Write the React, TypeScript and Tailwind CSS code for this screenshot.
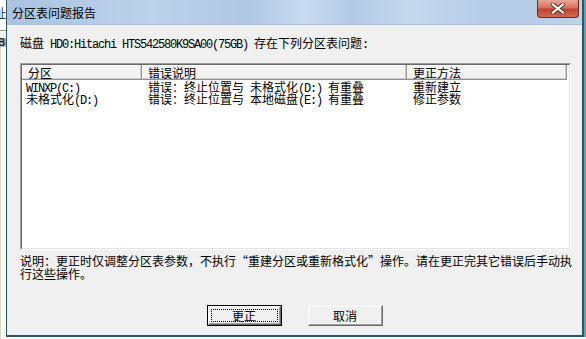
import React from 'react'

// half-width latin runs get a mono face squeezed to 6px per char, like the bitmap font
function T({ s }: { s: string }) {
  const parts = s.split(/([\x20-\x7e]+)/)
  return (
    <>
      {parts.map((p, i) =>
        /^[\x20-\x7e]+$/.test(p) ? (
          <span key={i} className="whitespace-pre font-['Liberation_Mono'] text-[12px] tracking-[-1.2px]">
            {p}
          </span>
        ) : (
          <React.Fragment key={i}>{p}</React.Fragment>
        )
      )}
    </>
  )
}

const rows = [
  { part: 'WINXP(C:)', err: '错误：终止位置与 未格式化(D:) 有重叠', fix: '重新建立' },
  { part: '未格式化(D:)', err: '错误：终止位置与 本地磁盘(E:) 有重叠', fix: '修正参数' },
]

export default function App() {
  return (
    <div className="flex w-[586px] h-[339px] overflow-hidden bg-[#fbfbef] text-black text-[12px] leading-[12px] font-['Noto_Sans_CJK_SC',sans-serif]">
      {/* window behind, left edge */}
      <div className="w-[6px] h-full flex flex-col overflow-hidden">
        <div className="h-[30px] bg-white pt-[7px] overflow-hidden">
          <span className="block ml-[-6px] whitespace-nowrap text-[#333]">址</span>
        </div>
        <div className="h-[1px] bg-[#9a9a9a]"></div>
        <div className="h-[7px] bg-[#f3f3ee]"></div>
        <div className="h-[9px] bg-[#c9c9c4] overflow-hidden">
          <span className="block ml-[-2px] font-['Liberation_Sans'] font-bold text-[10px] leading-[9px] text-[#222]">BI</span>
        </div>
        <div className="flex-1 bg-[#fdfdf0] border-l border-[#d8d8cc]"></div>
      </div>

      {/* dialog */}
      <div className="w-[578px] h-[337px] flex flex-col border-l border-r-2 border-b-2 border-[#2d5866]">
        {/* title bar */}
        <div className="relative h-[25px] flex items-center pl-[5px] bg-[linear-gradient(90deg,#a9c3e1_0%,#bcd2ea_25%,#afc8e4_42%,#c8dbf0_52%,#b2cae5_60%,#c5d9ee_70%,#b5cce7_84%,#bcd1ea_100%)] border-b border-[#a7bfda]">
          <span className="pt-[1px]">分区表问题报告</span>
          <div className="absolute right-[3px] top-0 w-[42px] h-[18px] rounded-b-[4px] border border-t-0 border-[#6b2a1e] bg-[linear-gradient(180deg,#e9a795_0%,#d8715c_45%,#c0432c_55%,#cf6a52_100%)] flex items-center justify-center">
            <svg width="14" height="11" viewBox="0 0 14 11">
              <path d="M2 1.5 L12 9.5 M12 1.5 L2 9.5" stroke="#5a2a22" strokeWidth="4" strokeLinecap="square" />
              <path d="M2 1.5 L12 9.5 M12 1.5 L2 9.5" stroke="#ffffff" strokeWidth="2.2" strokeLinecap="square" />
            </svg>
          </div>
        </div>

        {/* client area */}
        <div className="flex-1 flex flex-col bg-[#f0f0f0] border-l border-r border-b border-[#e4ecf4] pl-[12px] pt-[12px]">
          <div className="whitespace-nowrap">
            <T s="磁盘 HD0:Hitachi HTS542580K9SA00(75GB) 存在下列分区表问题:" />
          </div>

          {/* list view */}
          <div className="mt-[12px] w-[551px] h-[187px] border border-t-[#a0a0a0] border-l-[#a0a0a0] border-r-white border-b-white">
            <div className="h-full bg-white border border-t-[#696969] border-l-[#696969] border-r-[#e3e3e3] border-b-[#e3e3e3]">
              <div className="flex h-[15px]">
                <div className="w-[120px] pl-[6px] pt-[2px] bg-[#f3f3f3] border-r border-b border-[#8f8f8f] shadow-[inset_-1px_-1px_0_#d0d0d0,inset_1px_1px_0_#ffffff]">分区</div>
                <div className="w-[265px] pl-[6px] pt-[2px] bg-[#f3f3f3] border-r border-b border-[#8f8f8f] shadow-[inset_-1px_-1px_0_#d0d0d0,inset_1px_1px_0_#ffffff]">错误说明</div>
                <div className="w-[160px] pl-[6px] pt-[2px] bg-[#f3f3f3] border-r border-b border-[#8f8f8f] shadow-[inset_-1px_-1px_0_#d0d0d0,inset_1px_1px_0_#ffffff]">更正方法</div>
              </div>
              {rows.map((r) => (
                <div key={r.part} className="flex h-[12px] pt-[1px] whitespace-nowrap">
                  <div className="w-[120px] pl-[4px]"><T s={r.part} /></div>
                  <div className="w-[265px] pl-[6px]"><T s={r.err} /></div>
                  <div className="w-[160px] pl-[6px]">{r.fix}</div>
                </div>
              ))}
            </div>
          </div>

          {/* note */}
          <div className="mt-[4px] leading-[13px] whitespace-nowrap">
            说明：更正时仅调整分区表参数，不执行<span className="inline-block w-[12px] text-right">“</span>重建分区或重新格式化<span className="inline-block w-[12px] text-left">”</span>操作。请在更正完其它错误后手动执
            <br />
            行这些操作。
          </div>

          {/* buttons */}
          <div className="mt-[25px] flex justify-center gap-[26px] pr-[12px]">
            <div className="w-[75px] h-[21px] border border-black">
              <div className="h-full flex p-[2px] bg-[#f0f0f0] border border-t-white border-l-white border-r-[#696969] border-b-[#696969] shadow-[inset_-1px_-1px_0_#a0a0a0]">
                <div className="flex-1 flex items-center justify-center border border-dotted border-black">更正</div>
              </div>
            </div>
            <div className="w-[75px] h-[21px] flex items-center justify-center bg-[#f0f0f0] border border-t-[#f5f5f5] border-l-[#f5f5f5] border-r-[#696969] border-b-[#696969] shadow-[inset_-1px_-1px_0_#a0a0a0,inset_1px_1px_0_#ffffff]">
              取消
            </div>
          </div>
        </div>
      </div>

      {/* right edge */}
      <div className="w-[2px] h-[337px] bg-[#5fa3b4]"></div>
    </div>
  )
}
